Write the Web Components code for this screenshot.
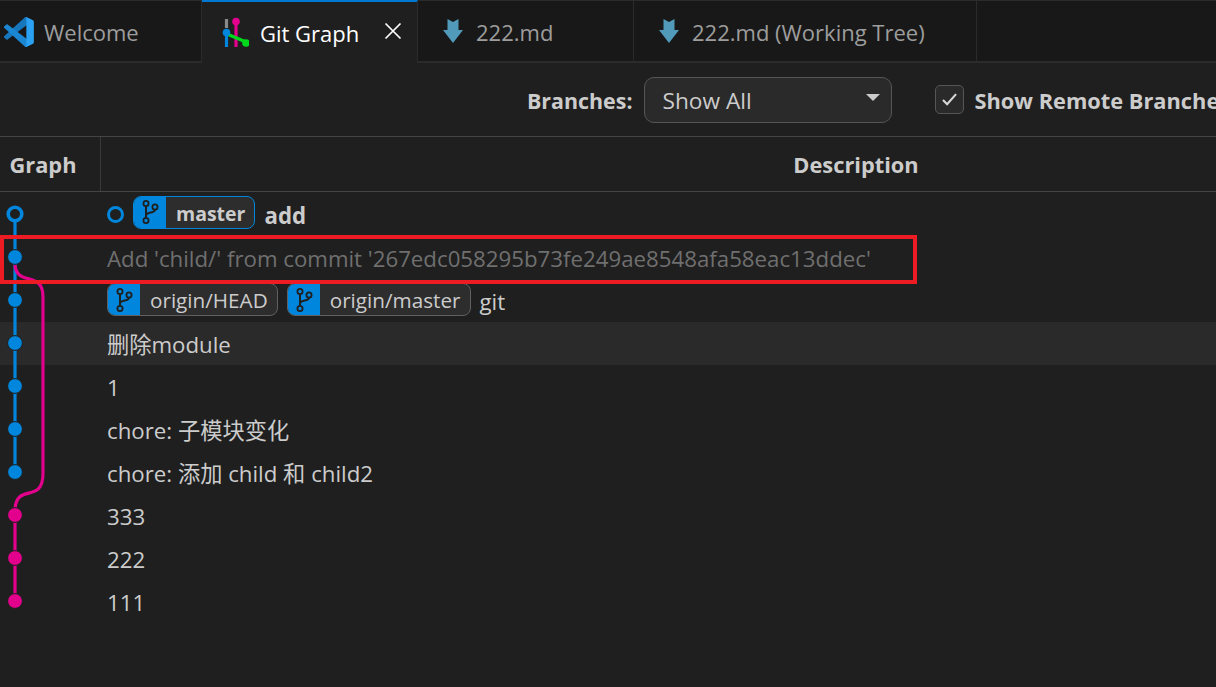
<!DOCTYPE html>
<html>
<head>
<meta charset="utf-8">
<title>Git Graph</title>
<style>
    html, body { margin: 0; height: 100%; background: #1f1f1f; overflow: hidden; }
    body { font-family: "Open Sans", "Noto Sans CJK SC", sans-serif; color: #cccccc; }
</style>
</head>
<body>
<git-graph-app></git-graph-app>

<script>
const BRANCH_ICON = `<svg viewBox="0 0 20 28" width="20" height="28" fill="none" stroke="#1f1f1f" stroke-width="1.8">
    <circle cx="6" cy="5.5" r="2.6"/><circle cx="6" cy="22.5" r="2.6"/><circle cx="15" cy="9" r="2.6"/>
    <path d="M6 8.2V19.8M6 17.5C6 13.5 15 15.5 15 11.7" stroke-width="2"/></svg>`;

class VsTab extends HTMLElement {
    connectedCallback() {
        this.attachShadow({ mode: 'open' });
        const active = this.hasAttribute('active');
        this.shadowRoot.innerHTML = `
            <style>
                :host {
                    display: flex; align-items: center; box-sizing: border-box; height: 63px; flex: none; padding-top: 2px;
                    background: ${active ? '#1f1f1f' : '#181818'};
                    color: ${active ? '#ffffff' : '#9d9d9d'};
                    border-top: 1px solid ${active ? '#0078d4' : '#2b2b2b'};
                    border-right: 1px solid #2b2b2b;
                    border-bottom: ${active ? '0' : '2px solid #2b2b2b'};
                    box-shadow: ${active ? 'inset 0 1px 0 #0078d4' : 'none'};
                    font-size: 22px; white-space: nowrap;
                }
                .icon { display: flex; flex: none; }
                .label { line-height: 30px; }
                .close { display: flex; margin-left: auto; }
            </style>
            <span class="icon"><slot name="icon"></slot></span>
            <span class="label"><slot></slot></span>
            <span class="close"><slot name="close"></slot></span>`;
    }
}

class GraphToolbar extends HTMLElement {
    connectedCallback() {
        this.attachShadow({ mode: 'open' });
        this.shadowRoot.innerHTML = `
            <style>
                :host {
                    display: flex; align-items: center; box-sizing: border-box; height: 74px;
                    padding-left: 527px; white-space: nowrap;
                    border-bottom: 1px solid #444444; font-size: 21.8px;
                }
                b { font-weight: 700; color: #cccccc; flex: none; padding-top: 2px; }
                b.first { font-size: 21.4px; }
                .select {
                    display: flex; align-items: center; justify-content: space-between; box-sizing: border-box; flex: none;
                    width: 248px; height: 46px; margin-left: 11px; padding: 0 11px 0 18px;
                    background: #2a2a2a; border: 1px solid #555555; border-radius: 10px; color: #cccccc; font-size: 22.7px;
                }
                .select span:first-child { padding-top: 2px; }
                .caret { width: 0; height: 0; border-left: 7px solid transparent; border-right: 7px solid transparent; border-top: 7px solid #cccccc; margin-top: -4px; }
                .check {
                    display: flex; align-items: center; justify-content: center; box-sizing: border-box; flex: none;
                    width: 29px; height: 29px; margin-left: 43px; margin-right: 11px;
                    background: #2a2a2a; border: 1px solid #555555; border-radius: 5px;
                }
            </style>
            <b class="first">Branches:</b>
            <div class="select"><span>Show All</span><span class="caret"></span></div>
            <div class="check"><svg viewBox="0 0 16 16" width="19" height="19" fill="none" stroke="#d8d8d8" stroke-width="1.8"><path d="M2.5 8.5l3.5 3.5 7.5-8.5"/></svg></div>
            <b>Show Remote Branches</b>`;
    }
}

class GraphHeader extends HTMLElement {
    connectedCallback() {
        this.attachShadow({ mode: 'open' });
        this.shadowRoot.innerHTML = `
            <style>
                :host {
                    display: grid; grid-template-columns: 101px 1510px; box-sizing: border-box; height: 55px;
                    border-bottom: 1px solid #444444; font-size: 21.8px; font-weight: 700; color: #cccccc;
                }
                div { display: flex; align-items: center; justify-content: center; }
                .graph { border-right: 1px solid #383838; padding-right: 14px; }
            </style>
            <div class="graph">Graph</div>
            <div>Description</div>`;
    }
}

class RefBadge extends HTMLElement {
    connectedCallback() {
        this.attachShadow({ mode: 'open' });
        const head = this.hasAttribute('head');
        this.shadowRoot.innerHTML = `
            <style>
                :host {
                    display: inline-flex; align-items: stretch; box-sizing: border-box; height: 33px; margin-right: 9px;
                    margin-bottom: ${head ? 7 : 4}px; flex: none;
                    border: 1px solid ${head ? '#0086dc' : '#606060'}; border-radius: 8px; overflow: hidden;
                    background: #2d2d2d;
                }
                .icon { display: flex; align-items: center; justify-content: center; width: 32px; background: #0086dc; }
                .name { display: flex; align-items: center; padding: ${head ? 4 : 2}px 9px 0 10px; font-size: ${head ? 19.5 : 20.7}px; font-weight: ${head ? 700 : 400}; line-height: 1; }
            </style>
            <span class="icon">${BRANCH_ICON}</span>
            <span class="name"><slot></slot></span>`;
    }
}

class CommitRow extends HTMLElement {
    connectedCallback() {
        this.attachShadow({ mode: 'open' });
        this.shadowRoot.innerHTML = `
            <style>
                :host {
                    display: flex; align-items: center; box-sizing: border-box; height: 43px; padding: 2px 0 0 107px;
                    font-size: 22.25px; line-height: 30px; white-space: nowrap; color: #cccccc;
                }
                :host([hover]) { background: #2a2a2a; }
                :host([merged]) { color: #6f6f6f; }
                :host([current]) { font-weight: 700; }
            </style>
            <slot></slot>`;
    }
}

class CommitGraph extends HTMLElement {
    connectedCallback() {
        this.attachShadow({ mode: 'open' });
        const blue = '#0086dc', pink = '#e3008c';
        const ys = [257, 300, 343, 386, 429, 472];
        const top = 137;
        const dot = (y, c) => `<circle cx="15" cy="${y - top}" r="7.4" fill="${c}" stroke="#1f1f1f" stroke-width="1"/>`;
        const dots = ys.map(y => dot(y, blue)).join('') + [515, 558, 601].map(y => dot(y, pink)).join('');
        this.shadowRoot.innerHTML = `
            <style>
                :host { position: absolute; left: 0; top: ${top}px; width: 60px; height: 480px; pointer-events: none; }
                svg { display: block; }
            </style>
            <svg width="60" height="480" fill="none" stroke-width="3.2">
                <path d="M15 84V335" stroke="${blue}"/>
                <path d="M15 128C17 150 43 133 43 160V336C43 368 17 345 15 372" stroke="${pink}"/>
                <path d="M15 378V464" stroke="${pink}"/>
                <circle cx="15" cy="77" r="6.8" stroke="${blue}" stroke-width="3.6" fill="#1f1f1f"/>
                ${dots}
            </svg>`;
    }
}

class GitGraphApp extends HTMLElement {
    connectedCallback() {
        this.attachShadow({ mode: 'open' });
        this.shadowRoot.innerHTML = `
            <style>
                :host { display: block; position: relative; width: 1216px; height: 687px; overflow: hidden; background: #1f1f1f; }
                .tabs { display: flex; height: 63px; background: #181818; }
                .rest { flex: 1; border-top: 1px solid #2b2b2b; border-bottom: 2px solid #2b2b2b; }
                .rows { padding-top: 1px; }
                .dot { display: inline-block; flex: none; box-sizing: border-box; width: 17px; height: 17px; margin: 0 9px 2px 0; border: 3.5px solid #0086dc; border-radius: 50%; }
                .annotation { position: absolute; left: 0; top: 235px; width: 917px; height: 49px; box-sizing: border-box; border: 4px solid #ed1c24; }
                .t-welcome { width: 202px; padding-left: 4px; }
                .t-graph { width: 216px; padding-left: 17px; }
                .t-file { width: 216px; padding-left: 25px; }
                .t-tree { width: 343px; padding-left: 25px; }
                svg[slot="icon"] { display: block; }
            </style>
            <div class="tabs">
                <vs-tab class="t-welcome">
                    <svg slot="icon" viewBox="0 0 100 100" width="30" height="30" style="margin-right:10px">
                        <path fill="#1677bd" d="M96 11 75.400 1.100a6.200 6.200 0 0 0-7.100 1.200L1.300 63.400a4.100 4.100 0 0 0 0 6.100l5.500 5a4.100 4.100 0 0 0 5.300.2L93 14.300a4.100 4.100 0 0 1 6.600 3.300v-.2A6.200 6.200 0 0 0 96 11z"/>
                        <path fill="#1b86d2" d="M96 89 75.400 98.900a6.200 6.200 0 0 1-7.100-1.200L1.300 36.600a4.100 4.100 0 0 1 0-6.100l5.500-5a4.100 4.100 0 0 1 5.300-.2L93 85.700a4.100 4.100 0 0 0 6.600-3.300v.2A6.200 6.200 0 0 1 96 89z"/>
                        <path fill="#2aa1f2" d="M75.400 98.900a6.200 6.200 0 0 1-7.100-1.200c2.300 2.300 6.200.7 6.200-2.600V4.900c0-3.300-3.900-4.900-6.200-2.600a6.200 6.200 0 0 1 7.100-1.200L96 11a6.200 6.200 0 0 1 3.500 5.600v66.800A6.200 6.200 0 0 1 96 89z"/>
                    </svg>Welcome
                </vs-tab>
                <vs-tab class="t-graph" active>
                    <svg slot="icon" viewBox="0 0 30 32" width="30" height="32" style="margin-right:11px">
                        <path d="M7.500 2V11" stroke="#8a8a8a" stroke-width="3.200"/>
                        <path d="M7.500 19V30" stroke="#0086dc" stroke-width="3.200"/>
                        <path d="M17 8V30" stroke="#e3008c" stroke-width="3.200"/>
                        <path d="M8 17 27 25" stroke="#00d81c" stroke-width="3.400"/>
                        <circle cx="7.500" cy="15.500" r="3.800" fill="#0086dc"/>
                        <circle cx="17" cy="4.500" r="3.800" fill="#e3008c"/>
                        <circle cx="27" cy="26" r="3.800" fill="#00d81c"/>
                    </svg>Git Graph
                    <svg slot="close" viewBox="0 0 18 18" width="18" height="18" style="margin:-4px 15px 0 0" stroke="#ffffff" stroke-width="1.700"><path d="M1.500 1.500 16.500 16.500M16.500 1.500 1.500 16.500"/></svg>
                </vs-tab>
                <vs-tab class="t-file">
                    <svg slot="icon" viewBox="0 0 20 24" width="20" height="24" style="margin-right:13px;margin-top:-3px"><path fill="#519aba" d="M4.500 0 10 3 15.500 0V11H20L10 24 0 11H4.500z"/></svg>222.md
                </vs-tab>
                <vs-tab class="t-tree">
                    <svg slot="icon" viewBox="0 0 20 24" width="20" height="24" style="margin-right:13px;margin-top:-3px"><path fill="#519aba" d="M4.500 0 10 3 15.500 0V11H20L10 24 0 11H4.500z"/></svg>222.md (Working Tree)
                </vs-tab>
                <div class="rest"></div>
            </div>
            <graph-toolbar></graph-toolbar>
            <graph-header></graph-header>
            <div class="rows">
                <commit-row current><span class="dot"></span><ref-badge head>master</ref-badge>add</commit-row>
                <commit-row merged>Add 'child/' from commit '267edc058295b73fe249ae8548afa58eac13ddec'</commit-row>
                <commit-row><ref-badge>origin/HEAD</ref-badge><ref-badge>origin/master</ref-badge>git</commit-row>
                <commit-row hover>删除module</commit-row>
                <commit-row>1</commit-row>
                <commit-row>chore: 子模块变化</commit-row>
                <commit-row>chore: 添加 child 和 child2</commit-row>
                <commit-row>333</commit-row>
                <commit-row>222</commit-row>
                <commit-row>111</commit-row>
            </div>
            <commit-graph></commit-graph>
            <div class="annotation"></div>`;
    }
}

customElements.define('vs-tab', VsTab);
customElements.define('graph-toolbar', GraphToolbar);
customElements.define('graph-header', GraphHeader);
customElements.define('ref-badge', RefBadge);
customElements.define('commit-row', CommitRow);
customElements.define('commit-graph', CommitGraph);
customElements.define('git-graph-app', GitGraphApp);
</script>
</body>
</html>
